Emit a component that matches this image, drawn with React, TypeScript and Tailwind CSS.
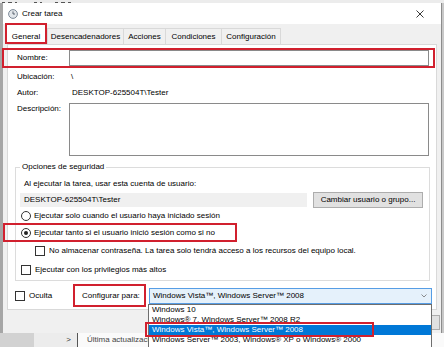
import React from 'react';

const RED = 'border-[#d1202e]';

const Check = () => <span className="w-[10px] h-[10px] border border-[#333] bg-white shrink-0" />;

const Radio = ({ on }: { on?: boolean }) => (
  <span className="w-[10px] h-[10px] rounded-full border border-[#333] bg-white shrink-0 flex items-center justify-center">
    {on && <span className="w-[4px] h-[4px] rounded-full bg-[#222]" />}
  </span>
);

const ClockIcon = () => (
  <svg width="10" height="10" viewBox="0 0 10 10">
    <circle cx="5" cy="5" r="4.4" fill="#e2e6ea" stroke="#6f7d8c" strokeWidth="0.9" />
    <path d="M5 2.4V5h2" fill="none" stroke="#4a5663" strokeWidth="0.9" />
  </svg>
);

const Tab = ({ label, w, last }: { label: string; w: string; last?: boolean }) => (
  <div className={`${w} h-[16px] bg-[#f0f0f0] border-t border-l border-[#d9d9d9] ${last ? 'border-r' : ''} flex items-center justify-center whitespace-nowrap`}>
    {label}
  </div>
);

const OPTIONS = [
  'Windows 10',
  'Windows® 7, Windows Server™ 2008 R2',
  'Windows Vista™, Windows Server™ 2008',
  'Windows Server™ 2003, Windows® XP o Windows® 2000',
];

export default function App() {
  return (
    <div className="relative w-[444px] h-[347px] overflow-hidden bg-[#f0f0f0] text-[8px] leading-[10px] text-black font-['Liberation_Sans',Arial,sans-serif]">
      {/* window behind, top edge (only the feet of its menu letters show) */}
      <div className="h-[3px] bg-[#ececec] flex items-end gap-[3px] pl-[2px]">
        <span className="w-[3px] h-[1px] bg-[#555]" />
        <span className="w-[4px] h-[1px] bg-[#555]" />
        <span className="w-[2px] h-[1px] bg-[#555]" />
        <span className="ml-[14px] w-[3px] h-[1px] bg-[#555]" />
        <span className="w-[2px] h-[1px] bg-[#555]" />
        <span className="ml-[10px] w-[3px] h-[1px] bg-[#555]" />
        <span className="w-[4px] h-[1px] bg-[#555]" />
        <span className="w-[3px] h-[1px] bg-[#555]" />
      </div>

      <div className="flex h-[330px]">
        <div className="w-[3px] bg-[#a6a6a6]" />
        <div className="w-[439px] flex flex-col bg-[#f0f0f0] border-r border-[#8c8c8c]">
          {/* title bar */}
          <div className="h-[21px] bg-white flex items-center pl-[5px] pr-[17px]">
            <ClockIcon />
            <span className="ml-[4px]">Crear tarea</span>
            <svg className="ml-auto" width="8" height="8" viewBox="0 0 8 8">
              <path d="M0.5 0.5l7 7M7.5 0.5l-7 7" stroke="#222" strokeWidth="0.9" />
            </svg>
          </div>

          {/* tabs */}
          <div className="h-[20px] flex items-end pl-[2px]">
            <div className={`h-[21px] w-[42px] border-2 ${RED} bg-white flex items-end justify-center`}>General</div>
            <Tab label="Desencadenadores" w="w-[76px]" />
            <Tab label="Acciones" w="w-[42px]" />
            <Tab label="Condiciones" w="w-[56px]" />
            <Tab label="Configuración" w="w-[60px]" last />
          </div>

          {/* tab page */}
          <div className="ml-[4px] w-[430px] h-[266px] bg-white border border-[#d9d9d9] pt-[3px] flex flex-col">
            <div className={`-ml-[6px] w-[433px] h-[20px] border-2 ${RED} flex items-center pl-[13px]`}>
              <span className="w-[52px]">Nombre:</span>
              <div className="w-[360px] h-[16px] border border-[#8a8a8a] bg-white" />
            </div>
            <div className="mt-[1px] h-[16px] flex items-center pl-[9px]">
              <span className="w-[52px]">Ubicación:</span>
              <span className="pl-[2px]">\</span>
            </div>
            <div className="h-[16px] flex items-center pl-[9px]">
              <span className="w-[52px]">Autor:</span>
              <span className="pl-[3px]">DESKTOP-625504T\Tester</span>
            </div>
            <div className="mt-[2px] flex items-start pl-[9px]">
              <span className="w-[52px] leading-[12px]">Descripción:</span>
              <div className="w-[360px] h-[53px] border border-[#8a8a8a] bg-white" />
            </div>

            <fieldset className="mt-[5px] ml-[7px] w-[415px] border border-[#dcdcdc]">
              <legend className="ml-[4px] px-[2px] leading-[12px]">Opciones de seguridad</legend>
              <div className="mt-[5px] leading-[12px] pl-[8px]">Al ejecutar la tarea, usar esta cuenta de usuario:</div>
              <div className="mt-[2px] h-[16px] flex items-center">
                <div className="ml-[4px] w-[287px] h-[14px] bg-[#f0f0f0] flex items-center pl-[4px]">DESKTOP-625504T\Tester</div>
                <div className="ml-[6px] w-[110px] h-[16px] bg-[#e1e1e1] border border-[#adadad] flex items-center justify-center whitespace-nowrap">
                  Cambiar usuario o grupo...
                </div>
              </div>
              <div className="h-[15px] flex items-center pl-[5px] gap-[3px]">
                <Radio />
                <span>Ejecutar solo cuando el usuario haya iniciado sesión</span>
              </div>
              <div className={`-ml-[13px] w-[234px] h-[19px] border-2 ${RED} flex items-center pl-[16px] gap-[3px] whitespace-nowrap`}>
                <Radio on />
                <span>Ejecutar tanto si el usuario inició sesión como si no</span>
              </div>
              <div className="h-[17px] flex items-center pl-[19px] gap-[4px]">
                <Check />
                <span>No almacenar contraseña. La tarea solo tendrá acceso a los recursos del equipo local.</span>
              </div>
              <div className="h-[21px] flex items-center pl-[5px] gap-[4px]">
                <Check />
                <span>Ejecutar con los privilegios más altos</span>
              </div>
            </fieldset>

            <div className="mt-[3px] h-[23px] flex items-center">
              <div className="w-[65px] pl-[7px] flex items-center gap-[4px]">
                <Check />
                <span>Oculta</span>
              </div>
              <div className={`w-[73px] h-[23px] border-2 ${RED} flex items-center pl-[7px] whitespace-nowrap`}>Configurar para:</div>
              <div className="ml-[3px] w-[283px] h-[16px] border border-[#569de5] bg-[#e5f1fb] flex items-center justify-between pl-[3px] pr-[4px]">
                <span>Windows Vista™, Windows Server™ 2008</span>
                <svg width="6" height="4" viewBox="0 0 6 4">
                  <path d="M0.5 0.5L3 3l2.5-2.5" fill="none" stroke="#707070" strokeWidth="0.8" />
                </svg>
              </div>
            </div>
          </div>

          {/* dialog buttons, mostly hidden by the open list */}
          <div className="flex-1 flex justify-end items-start pt-[5px] pr-[1px] gap-[6px]">
            <div className="w-[70px] h-[15px] bg-[#e1e1e1] border border-[#adadad] flex items-center justify-center">Aceptar</div>
            <div className="w-[70px] h-[15px] bg-[#e1e1e1] border border-[#adadad] flex items-center justify-center">Cancelar</div>
          </div>
        </div>
        <div className="w-[2px] bg-[#c8c8c8]" />
      </div>

      {/* window behind, bottom edge */}
      <div className="flex h-[14px]">
        <div className="w-[34px] bg-[#d2d2d2]" />
        <div className="w-[43px] bg-[#ececec] flex items-center justify-end pr-[6px] text-[#333]">&gt;</div>
        <div className="w-px bg-[#555]" />
        <div className="flex-1 bg-[#fafafa] flex items-center pl-[9px] text-[#444]">Última actualización</div>
      </div>

      {/* open dropdown list */}
      <div className="absolute left-[148px] top-[304px] w-[284px] h-[46px] bg-white border border-[#6e6e6e]">
        {OPTIONS.map((o, i) => (
          <div key={o} className={`h-[10px] leading-[10px] pl-[3px] whitespace-nowrap ${i === 2 ? 'bg-[#0078d7] text-white' : ''}`}>
            {o}
          </div>
        ))}
      </div>
      <div className={`absolute left-[145px] top-[322px] w-[229px] h-[15px] border-2 ${RED}`} />
    </div>
  );
}
